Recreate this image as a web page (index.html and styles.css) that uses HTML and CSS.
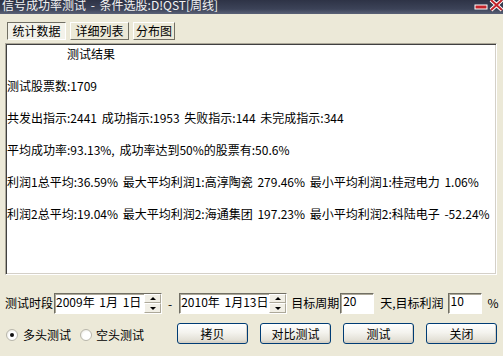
FILE: index.html
```html
<!DOCTYPE html>
<html lang="zh-CN">
<head>
    <meta charset="UTF-8">
    <meta name="viewport" content="width=device-width, initial-scale=1.0">
    <title>信号成功率测试</title>
    <link rel="stylesheet" href="styles.css">
</head>
<body>
    <div class="titlebar">
        <span class="title">信号成功率测试 - 条件选股:D!QST[周线]</span>
        <svg class="caption-btns" width="30" height="14" viewBox="0 0 30 14">
            <rect x="2" y="5" width="12" height="4" fill="#c4242b" stroke="#fff" stroke-width="1"/>
            <path d="M18 0 L29 10 M29 0 L18 10" stroke="#fff" stroke-width="4" fill="none"/>
            <path d="M18 0 L29 10 M29 0 L18 10" stroke="#c4242b" stroke-width="2" fill="none"/>
        </svg>
    </div>

    <div class="tabs">
        <button class="tab active">统计数据</button>
        <button class="tab">详细列表</button>
        <button class="tab short">分布图</button>
    </div>

    <div class="report">
        <p class="heading">测试结果</p>
        <p>测试股票数:1709</p>
        <p>共发出指示:2441 成功指示:1953 失败指示:144 未完成指示:344</p>
        <p>平均成功率:93.13%, 成功率达到50%的股票有:50.6%</p>
        <p>利润1总平均:36.59% 最大平均利润1:高淳陶瓷 279.46% 最小平均利润1:桂冠电力 1.06%</p>
        <p>利润2总平均:19.04% 最大平均利润2:海通集团 197.23% 最小平均利润2:科陆电子 -52.24%</p>
    </div>

    <div class="params">
        <span class="label">测试时段</span>
        <div class="datebox">
            <span class="date-text">2009年 1月 1日</span>
            <div class="spinner">
                <span class="spin up"></span>
                <span class="spin down"></span>
            </div>
        </div>
        <span class="dash">-</span>
        <div class="datebox">
            <span class="date-text">2010年 1月13日</span>
            <div class="spinner">
                <span class="spin up"></span>
                <span class="spin down"></span>
            </div>
        </div>
        <span class="label gap-s">目标周期</span>
        <span class="edit">20</span>
        <span class="label gap-m">天,目标利润</span>
        <span class="edit">10</span>
        <span class="label gap-m">%</span>
    </div>

    <div class="actions">
        <label class="radio"><span class="dot checked"></span>多头测试</label>
        <label class="radio second"><span class="dot"></span>空头测试</label>
        <div class="buttons">
            <button class="btn">拷贝</button>
            <button class="btn">对比测试</button>
            <button class="btn">测试</button>
            <button class="btn">关闭</button>
        </div>
    </div>
</body>
</html>
```

FILE: styles.css
```css
body {
    margin: 0;
    width: 503px;
    height: 356px;
    overflow: hidden;
    background-color: #ece9d8;
    font-family: "Noto Sans CJK SC", "DejaVu Sans", sans-serif;
    font-size: 12px;
    word-spacing: 2px;
    color: #000;
}

.titlebar {
    height: 14px;
    display: flex;
    justify-content: space-between;
    overflow: hidden;
    background: linear-gradient(#2e3346, #3c4358 65%, #5a6177);
}

.title {
    color: #f2f2f2;
    font-size: 12px;
    line-height: 12px;
    margin: -1px 0 0 2px;
    white-space: nowrap;
}

.caption-btns {
    display: block;
}

.tabs {
    display: flex;
    gap: 4px;
    padding: 8px 0 0 7px;
}

.tab {
    box-sizing: border-box;
    width: 59px;
    height: 18px;
    padding: 0;
    font: inherit;
    line-height: 16px;
    color: #000;
    background-color: #ece9d8;
    border: 1px solid;
    border-color: #fff #716f64 #716f64 #fff;
}

.tab.short {
    width: 42px;
}

.tab.active {
    border-color: #716f64 #fff #fff #716f64;
    background-color: #f3f2ea;
}

.report {
    box-sizing: border-box;
    height: 232px;
    margin: 3px 6px 0 5px;
    padding: 2px 1px;
    background-color: #fff;
    border: 1px solid;
    border-color: #aca899 #fff #fff #aca899;
    box-shadow: inset 1px 1px #404040, inset -1px -1px #d4d0c8;
    white-space: nowrap;
    overflow: hidden;
}

.report p {
    margin: 0 0 16px;
    line-height: 16px;
}

.report .heading {
    padding-left: 60px;
}

.params {
    display: flex;
    align-items: center;
    height: 22px;
    margin-top: 17px;
    padding-left: 5px;
    white-space: nowrap;
}

.label {
    line-height: 14px;
}

.gap-s {
    margin: 0 1px 0 4px;
}

.gap-m {
    margin: 0 4px 0 6px;
}

.datebox {
    box-sizing: border-box;
    display: flex;
    align-items: center;
    justify-content: space-between;
    width: 108px;
    height: 21px;
    margin-left: 1px;
    background-color: #fff;
    border: 1px solid;
    border-color: #716f64 #fff #fff #716f64;
    box-shadow: inset 1px 1px #aca899;
}

.date-text {
    padding: 0 0 2px 1px;
    line-height: 14px;
}

.spinner {
    display: flex;
    flex-direction: column;
    width: 17px;
    height: 19px;
}

.spin {
    flex: 1;
    position: relative;
    background-color: #f1efe6;
    border: 1px solid;
    border-color: #fff #aca899 #aca899 #fff;
}

.spin::after {
    content: "";
    position: absolute;
    left: 5px;
    border-left: 3px solid transparent;
    border-right: 3px solid transparent;
}

.spin.up::after {
    top: 2px;
    border-bottom: 3px solid #000;
}

.spin.down::after {
    top: 3px;
    border-top: 3px solid #000;
}

.dash {
    margin: 0 6px;
}

.edit {
    box-sizing: border-box;
    width: 34px;
    height: 21px;
    padding: 1px 2px;
    line-height: 12px;
    background-color: #fff;
    border: 1px solid;
    border-color: #716f64 #fff #fff #716f64;
    box-shadow: inset 1px 1px #aca899;
}

.actions {
    display: flex;
    align-items: center;
    height: 21px;
    margin-top: 9px;
    padding-left: 6px;
}

.radio {
    display: flex;
    align-items: center;
    gap: 5px;
    margin-top: 2px;
}

.radio.second {
    margin-left: 9px;
    gap: 4px;
}

.dot {
    box-sizing: border-box;
    width: 12px;
    height: 12px;
    border-radius: 50%;
    border: 1px solid #b9b7ac;
    background: radial-gradient(circle at 60% 60%, #fff 45%, #e2e0d6);
    position: relative;
}

.dot.checked::after {
    content: "";
    position: absolute;
    left: 3px;
    top: 3px;
    width: 4px;
    height: 4px;
    border-radius: 50%;
    background-color: #111;
}

.buttons {
    display: flex;
    gap: 12px;
    margin-left: auto;
    padding-right: 6px;
}

.btn {
    box-sizing: border-box;
    width: 71px;
    height: 21px;
    padding: 0;
    font: inherit;
    color: #000;
    border: 1px solid #003c74;
    border-radius: 3px;
    background: linear-gradient(#fff, #f4f3ee 45%, #e3e0d6 85%, #cdc8bc);
    box-shadow: inset -1px -1px #d6d0c5;
}
```
